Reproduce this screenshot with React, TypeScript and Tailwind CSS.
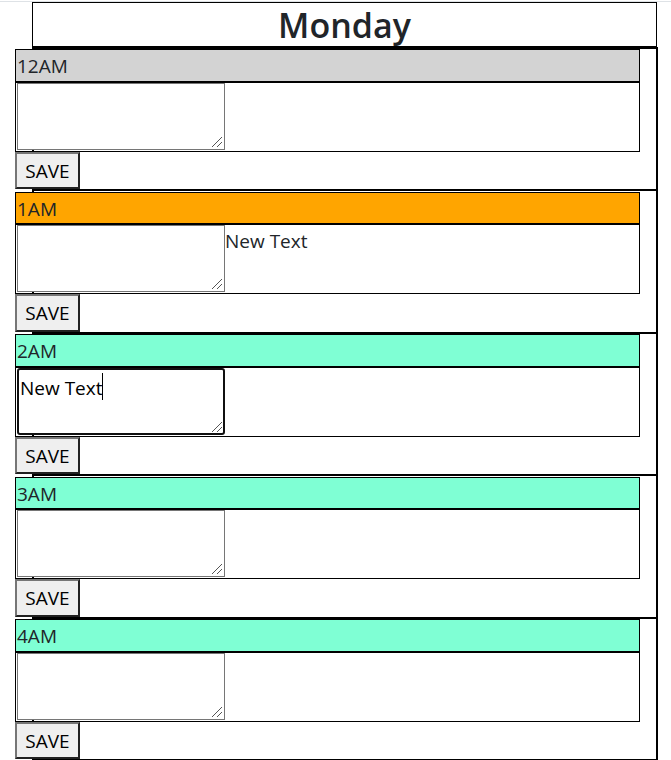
import { useState } from "react";

type Slot = { hour: string; tone: string; draft?: string; saved?: string; active?: boolean };

const slots: Slot[] = [
  { hour: "12AM", tone: "bg-[#d3d3d3]" },
  { hour: "1AM", tone: "bg-[#ffa500]", saved: "New Text" },
  { hour: "2AM", tone: "bg-[#7fffd4]", draft: "New Text", active: true },
  { hour: "3AM", tone: "bg-[#7fffd4]" },
  { hour: "4AM", tone: "bg-[#7fffd4]" },
];

function HourRow({ slot }: { slot: Slot }) {
  const [draft, setDraft] = useState(slot.draft ?? "");
  const [saved, setSaved] = useState(slot.saved ?? "");
  const id = `slot-${slot.hour}`;

  return (
    <section className="group border-b-2 border-black even:pt-px">
      <div className="-ml-[19px] mr-4">
        <label
          htmlFor={id}
          className={`block h-[33px] border border-black pl-px leading-8 group-even:h-8 ${slot.tone}`}
        >
          {slot.hour}
        </label>
        <div className="flex h-[70px] items-start border border-black pl-px">
          <div className="relative">
            <textarea
              id={id}
              value={draft}
              onChange={(e) => setDraft(e.target.value)}
              className={`block h-[67px] w-52 resize-none bg-white leading-7 text-black outline-none ${
                slot.active
                  ? "rounded-[3px] border-2 border-[#101010] px-px py-1 caret-transparent"
                  : "border border-[#767676] px-0.5 py-[5px]"
              }`}
            />
            <svg
              viewBox="0 0 10 10"
              className="pointer-events-none absolute right-[3px] bottom-[3px] size-2.5"
              stroke="#555"
              aria-hidden="true"
            >
              <path d="M0 10L10 0M5 10L10 5" />
            </svg>
            {slot.active && <span className="absolute top-[5px] left-[85px] h-[27px] w-px bg-black" />}
          </div>
          <span className="leading-8">{saved}</span>
        </div>
        <button
          type="button"
          onClick={() => setSaved(draft)}
          className="block h-[37px] w-[65px] border-2 border-t-[#767676] border-r-[#212121] border-b-[#212121] border-l-[#767676] bg-[#efefef] text-center leading-8 text-black group-even:h-[38px]"
        >
          SAVE
        </button>
      </div>
    </section>
  );
}

export default function App() {
  return (
    <main className="mt-px border-t border-[#dee2e6] bg-white font-['Open_Sans','Noto_Sans',sans-serif] text-[19px] text-[#212529]">
      <div className="ml-8 mr-[13px]">
        <h1 className="mr-px h-[45px] border border-black text-center text-[34px] leading-[45px] font-semibold">
          Monday
        </h1>
        <div className="border-x-2 border-t-2 border-black">
          {slots.map((slot) => (
            <HourRow key={slot.hour} slot={slot} />
          ))}
        </div>
      </div>
    </main>
  );
}
